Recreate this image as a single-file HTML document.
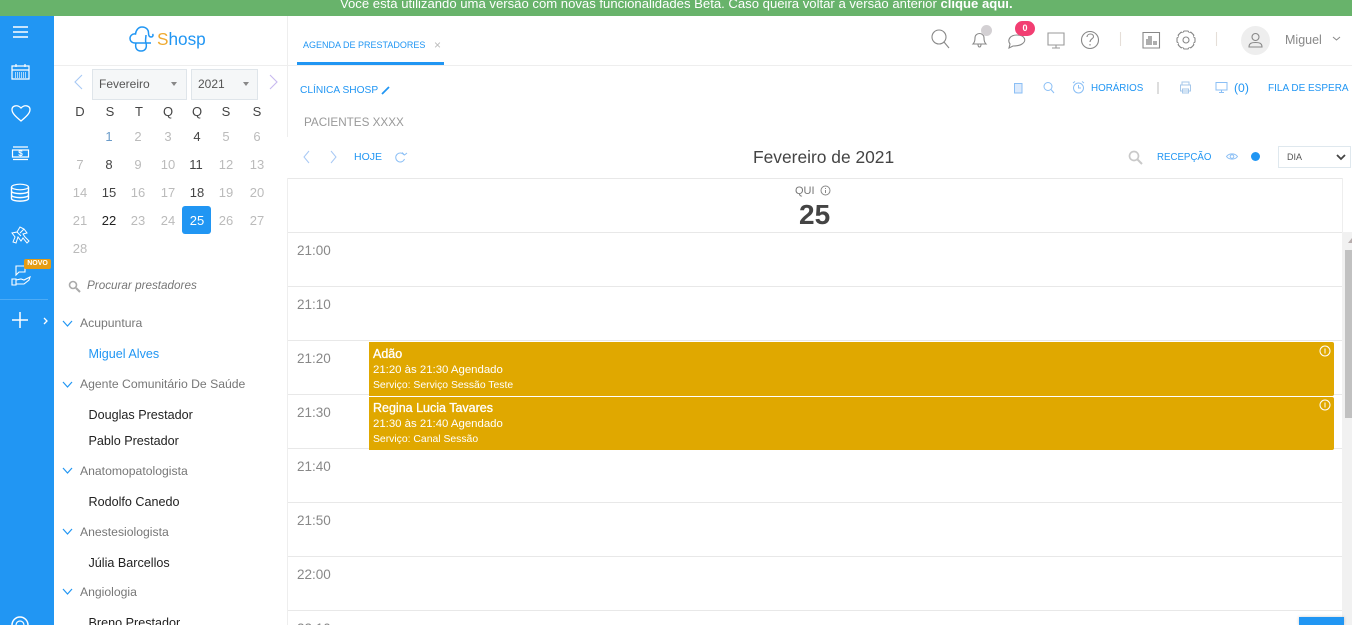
<!DOCTYPE html>
<html lang="pt"><head><meta charset="utf-8"><title>Shosp</title>
<style>
html,body{margin:0;padding:0;width:1352px;height:625px;overflow:hidden;background:#fff;font-family:"Liberation Sans",sans-serif}
#w{position:relative;width:1352px;height:625px;overflow:hidden;background:#fff}
.t{position:absolute;white-space:nowrap;line-height:16px}
.r{position:absolute}
svg{position:absolute;overflow:visible;fill:none}
.c{text-align:center;width:30px;font-size:13px;color:#bbb}
.d{color:#444}
.b{color:#2196f3}
.h{height:1px;left:288px;width:1054px;background:#e8e8e8}
.time{font-size:13.500px;color:#888;left:297px}
.cat{left:80px;font-size:12.200px;color:#777}
.doc{left:88.500px;font-size:12.600px;color:#222}
.evn{left:373px;font-size:12.500px;color:#fff;-webkit-text-stroke:.3px #fff}
.evt{left:373px;font-size:11.400px;color:#fff}
.evs{left:373px;font-size:10.400px;color:#fff}
</style></head><body><div id="w">
<div class="r" style="left:0;top:0;width:1352px;height:16px;background:#68b36b;overflow:hidden"><div class="t" style="left:340px;top:-4px;font-size:13.120px;color:#fff">Você está utilizando uma versão com novas funcionalidades Beta. Caso queira voltar a versão anterior <b>clique aqui.</b></div></div>

<!-- blue sidebar -->
<div class="r" style="left:0;top:16px;width:54px;height:609px;background:#2196f3"></div>
<svg style="left:0;top:0" width="54" height="625" stroke="#fff" stroke-width="1.2">
<path d="M13 27H28M13 32H28M13 37H28" stroke-width="1.4"/>
<path d="M12 66H29V79H12ZM12 70H29M16 64V67M25 64V67"/><path d="M15 73H26M15 75H26M15 77H26" stroke-dasharray="1 1"/>
<path d="M21 121C15 116 12 113 12 109.500C12 106 17 104 21 108C25 104 30 106 30 109.500C30 113 27 116 21 121Z" stroke-width="1.3"/>
<path d="M12.500 150H28.500V157H12.500ZM13 147H28M13 159.500H28"/>
<ellipse cx="20" cy="187" rx="8.500" ry="2.800"/><path d="M11.500 187V198.500C11.500 202 28.500 202 28.500 198.500V187M11.500 191C11.500 194.500 28.500 194.500 28.500 191M11.500 195C11.500 198.500 28.500 198.500 28.500 195" stroke-width="1.400"/>
<path d="M13 242L15 237L12 233L17 232L20 227L24 229L27 233L23 234L25 237L29 241L27 243L23 238L21 241L18 237L16 243ZM17 232L21 236M24 229L20 233" stroke-width="1"/>
<path d="M16 266H25V272H19L16 275ZM12 279H16V285H12ZM16 280L21 279L24 280L30 277L29 280L24 284H16" stroke-width="1.1"/>
<path d="M0 299.500H48" stroke="#4dabf5" stroke-width="1"/>
<path d="M20 312V328M12 320H28" stroke-width="1.5"/><path d="M44 318L47 321L44 324" stroke-width="1.3"/>
<circle cx="20" cy="625" r="8" stroke-width="1.500"/><circle cx="20" cy="625" r="4"/>
</svg>
<div class="t" style="left:12.500px;top:149px;width:16px;height:9px;line-height:9px;color:#fff;font-size:8px;font-weight:bold;text-align:center">$</div>
<div class="t" style="left:24px;top:259px;width:27px;height:10px;line-height:10px;background:#e59c14;border-radius:2px;color:#fff;font-size:7px;font-weight:bold;text-align:center">NOVO</div>

<!-- logo -->
<svg style="left:128px;top:26px" width="30" height="26" stroke="#2196f3" stroke-width="1.500"><path d="M23 17H7C3.500 17 2 14.500 2 12.500C2 10 4 7.500 7.500 8C8 4 10.500 1 14 1C18 1 20.500 3.500 20.500 7C20.500 9 21 11 23 11C25 11 25.500 9 24.500 8"/><path d="M8 17C7 21 8 25 13 25C18 25 19 21 18 17C17 15 18 11 18 9"/></svg>
<div class="t" style="left:157px;top:29px;font-size:17.200px;line-height:20px;color:#2196f3"><span style="color:#efa92f">S</span>hosp</div>
<div class="r" style="left:54px;top:65px;width:1298px;height:1px;background:#eee"></div>
<div class="r" style="left:287px;top:16px;width:1px;height:121px;background:#eee"></div>
<div class="r" style="left:287px;top:178px;width:1px;height:447px;background:#eee"></div>

<!-- calendar -->
<svg style="left:72px;top:74px" width="210" height="18" stroke-width="1.100"><path d="M10 1L3 8L10 15" stroke="#a8c9f5"/><path d="M198 1L205 8L198 15" stroke="#c7b9ef"/></svg>
<div class="r" style="left:92px;top:69px;width:93px;height:29px;background:#f5f7f8;border:1px solid #dfe5ea"></div>
<div class="t" style="left:99px;top:76px;font-size:12px;color:#555">Fevereiro</div>
<div class="r" style="left:171px;top:82px;border:3px solid transparent;border-top:4px solid #888;border-bottom:0"></div>
<div class="r" style="left:191px;top:69px;width:65px;height:29px;background:#f5f7f8;border:1px solid #dfe5ea"></div>
<div class="t" style="left:198px;top:76px;font-size:12px;color:#555">2021</div>
<div class="r" style="left:243px;top:82px;border:3px solid transparent;border-top:4px solid #888;border-bottom:0"></div>

<div class="t c d" style="left:65px;top:104px">D</div><div class="t c d" style="left:95px;top:104px">S</div><div class="t c d" style="left:124px;top:104px">T</div><div class="t c d" style="left:153px;top:104px">Q</div><div class="t c d" style="left:182px;top:104px">Q</div><div class="t c d" style="left:211px;top:104px">S</div><div class="t c d" style="left:242px;top:104px">S</div>
<div class="t c" style="left:94px;top:129px;color:#6a9bc9">1</div><div class="t c" style="left:123px;top:129px">2</div><div class="t c" style="left:153px;top:129px">3</div><div class="t c d" style="left:182px;top:129px">4</div><div class="t c" style="left:211px;top:129px">5</div><div class="t c" style="left:242px;top:129px">6</div>
<div class="t c" style="left:65px;top:157px">7</div><div class="t c d" style="left:94px;top:157px">8</div><div class="t c" style="left:123px;top:157px">9</div><div class="t c" style="left:153px;top:157px">10</div><div class="t c d" style="left:181px;top:157px">11</div><div class="t c" style="left:211px;top:157px">12</div><div class="t c" style="left:242px;top:157px">13</div>
<div class="t c" style="left:65px;top:185px">14</div><div class="t c d" style="left:94px;top:185px">15</div><div class="t c" style="left:123px;top:185px">16</div><div class="t c" style="left:153px;top:185px">17</div><div class="t c d" style="left:182px;top:185px">18</div><div class="t c" style="left:211px;top:185px">19</div><div class="t c" style="left:242px;top:185px">20</div>
<div class="t c" style="left:65px;top:213px">21</div><div class="t c d" style="left:94px;top:213px;color:#222">22</div><div class="t c" style="left:123px;top:213px">23</div><div class="t c" style="left:153px;top:213px">24</div>
<div class="r" style="left:182px;top:206px;width:29px;height:28px;background:#2196f3;border-radius:3px"></div><div class="t c" style="left:182px;top:213px;color:#fff">25</div>
<div class="t c" style="left:211px;top:213px">26</div><div class="t c" style="left:242px;top:213px">27</div>
<div class="t c" style="left:65px;top:241px">28</div>

<!-- list -->
<svg style="left:68px;top:280px" width="13" height="13" stroke="#aaa" stroke-width="1.600"><circle cx="5" cy="5" r="3.500"/><path d="M8 8L12 12" stroke-width="2"/></svg>
<div class="t" style="left:87px;top:278px;font-size:11.700px;font-style:italic;color:#777">Procurar prestadores</div>
<svg style="left:62px;top:320px" width="12" height="280" stroke="#2196f3" stroke-width="1.200"><path d="M1 1L5.500 6L10 1M1 62L5.500 67L10 62M1 148L5.500 153L10 148M1 209L5.500 214L10 209M1 269L5.500 274L10 269"/></svg>
<div class="t cat" style="top:315px">Acupuntura</div>
<div class="t doc" style="top:346px;color:#2196f3">Miguel Alves</div>
<div class="t cat" style="top:376px">Agente Comunitário De Saúde</div>
<div class="t doc" style="top:407px">Douglas Prestador</div>
<div class="t doc" style="top:433px">Pablo Prestador</div>
<div class="t cat" style="top:463px">Anatomopatologista</div>
<div class="t doc" style="top:494px">Rodolfo Canedo</div>
<div class="t cat" style="top:524px">Anestesiologista</div>
<div class="t doc" style="top:555px">Júlia Barcellos</div>
<div class="t cat" style="top:584px">Angiologia</div>
<div class="t doc" style="top:615px">Breno Prestador</div>

<!-- tab -->
<div class="t b" style="left:303px;top:37px;font-size:9px">AGENDA DE PRESTADORES</div>
<div class="t" style="left:434px;top:37px;font-size:12px;color:#bbb">×</div>
<div class="r" style="left:297px;top:62px;width:147px;height:3px;background:#2196f3"></div>

<!-- top icons -->
<svg style="left:930px;top:28px" width="400" height="24" stroke="#888" stroke-width="1.100">
<circle cx="9" cy="9" r="7"/><path d="M14 14L19 20"/>
<path d="M43 16C45 14 45 12 45 10C45 4 54 4 54 10C54 12 54 14 56 16ZM48 16C48 20 51 20 51 16"/>
<path d="M79 20L80 16C77 12 80 7 87 7C95 7 97 13 92 16C89 18 85 18 83 18Z"/>
<path d="M118 5H134V17H118ZM126 17V20M122 20H130" stroke="#999"/>
<circle cx="160" cy="12" r="8.500"/><path d="M157 9C157 5 164 5 163.500 9C163 11 160 11 160 14M160 16V17.500"/>
<path d="M190.500 4V18M286.500 4V18" stroke="#e5ded8"/>
<path d="M213 4.500H229.500V20H213Z"/><path d="M217 17V11M219 17V8M221 17V8M224 17V13M226 17V13" stroke="#777" stroke-width="1.200"/>
<g fill="#fff"><rect x="253.500" y="3" width="5" height="18" rx="1"/><rect x="253.500" y="3" width="5" height="18" rx="1" transform="rotate(45 256 12)"/><rect x="253.500" y="3" width="5" height="18" rx="1" transform="rotate(90 256 12)"/><rect x="253.500" y="3" width="5" height="18" rx="1" transform="rotate(135 256 12)"/><circle cx="256" cy="12" r="7" stroke="#fff" stroke-width="2"/><circle cx="256" cy="12" r="3"/></g>
</svg>
<div class="r" style="left:981px;top:25px;width:11px;height:11px;background:#d3d0d3;border-radius:50%"></div>
<div class="t" style="left:1015px;top:21px;width:20px;height:15px;line-height:15px;background:#f23e72;border-radius:8px;color:#fff;font-size:9px;font-weight:bold;text-align:center">0</div>
<div class="r" style="left:1241px;top:26px;width:29px;height:29px;background:#eee;border-radius:50%"></div>
<svg style="left:1248px;top:32px" width="16" height="16" stroke="#888" stroke-width="1.100"><circle cx="7.500" cy="5" r="3.500"/><path d="M1 15C1 11 4 10.500 7.500 10.500C11 10.500 14 11 14 15Z"/></svg>
<div class="t" style="left:1285px;top:32px;font-size:12.500px;color:#888">Miguel</div>
<svg style="left:1332px;top:36px" width="9" height="6" stroke="#888"><path d="M1 1L4.500 4L8 1"/></svg>

<!-- second row -->
<div class="t b" style="left:300px;top:83px;font-size:10.200px">CLÍNICA SHOSP</div>
<svg style="left:381px;top:85px" width="10" height="10" stroke="#2196f3" stroke-width="1.800"><path d="M1 9L8 2"/></svg>
<div class="t" style="left:304px;top:114.500px;font-size:11.700px;color:#999">PACIENTES XXXX</div>
<svg style="left:1010px;top:80px" width="240" height="16" stroke="#8bbff5" stroke-width="1">
<path d="M4.500 3.500H12V13H4.500Z" fill="#dceafc"/>
<circle cx="38" cy="6.500" r="4"/><path d="M41 9.500L44 13"/>
<circle cx="68.500" cy="8" r="5"/><path d="M68.500 5V8H71M63 3L65 1.500M74 3L72 1.500"/>
<path d="M148 2V14" stroke="#bbb"/>
<path d="M170.500 5H180.500V11H170.500ZM172 5V2H179V5M172.500 9H178.500V13H172.500Z" stroke="#a5c7ea"/>
<path d="M206 2.500H217V10H206ZM211.500 10V12.500M209 12.500H214"/>
</svg>
<div class="t b" style="left:1091px;top:81px;font-size:9.800px">HORÁRIOS</div>
<div class="t b" style="left:1234px;top:80px;font-size:12.200px">(0)</div>
<div class="t b" style="left:1268px;top:81px;font-size:10px">FILA DE ESPERA</div>

<!-- toolbar -->
<svg style="left:303px;top:150px" width="100" height="14" stroke="#a8c9f5" stroke-width="1"><path d="M6 1L1 7L6 13M28 1L33 7L28 13"/><path d="M101 5A4.500 4.500 0 1 0 101.500 9M99 2.500L101.500 5L104 3" stroke="#8bbff5"/></svg>
<div class="t b" style="left:354px;top:149px;font-size:10.500px">HOJE</div>
<div class="t" style="left:753px;top:147px;font-size:17.400px;line-height:20px;color:#444">Fevereiro de 2021</div>
<svg style="left:1128px;top:150px" width="16" height="16" stroke="#c9c9c9" stroke-width="1.700"><circle cx="6" cy="6" r="4.500"/><path d="M9.500 9.500L14 14" stroke-width="2"/></svg>
<div class="t b" style="left:1157px;top:150px;font-size:9.700px">RECEPÇÃO</div>
<svg style="left:1226px;top:153px" width="12" height="8" stroke="#8bbff5"><path d="M0.500 3.500C3 0 9 0 11.500 3.500C9 7 3 7 0.500 3.500Z"/><circle cx="6" cy="3.500" r="1.800"/></svg>
<div class="r" style="left:1251px;top:152px;width:9px;height:9px;background:#2196f3;border-radius:50%"></div>
<div class="r" style="left:1278px;top:146px;width:71px;height:20px;border:1px solid #dfe8ee"></div>
<div class="t" style="left:1287px;top:149px;font-size:9px;color:#555">DIA</div>
<svg style="left:1336px;top:154px" width="10" height="6" stroke="#444" stroke-width="1.800"><path d="M1 1L5 5L9 1"/></svg>

<!-- grid -->
<div class="r h" style="top:178px"></div>
<div class="r" style="left:1342px;top:178px;width:1px;height:54px;background:#eee"></div>
<div class="t" style="left:795px;top:183px;font-size:11px;color:#777">QUI</div>
<svg style="left:820px;top:185px" width="11" height="11" stroke="#888"><circle cx="5.500" cy="5.500" r="4.500"/><path d="M5.500 3V4M5.500 5V8"/></svg>
<div class="t" style="left:799px;top:200px;font-size:28px;line-height:30px;font-weight:bold;color:#444">25</div>
<div class="r h" style="top:232px"></div>
<div class="r h" style="top:286px"></div>
<div class="r h" style="top:340px"></div>
<div class="r h" style="top:394px"></div>
<div class="r h" style="top:448px"></div>
<div class="r h" style="top:502px"></div>
<div class="r h" style="top:556px"></div>
<div class="r h" style="top:610px"></div>
<div class="t time" style="top:243px">21:00</div>
<div class="t time" style="top:297px">21:10</div>
<div class="t time" style="top:351px">21:20</div>
<div class="t time" style="top:405px">21:30</div>
<div class="t time" style="top:459px">21:40</div>
<div class="t time" style="top:513px">21:50</div>
<div class="t time" style="top:567px">22:00</div>
<div class="t time" style="top:621px">22:10</div>

<!-- events -->
<div class="r" style="left:369px;top:342px;width:965px;height:54px;background:#e0a800;border-radius:0 2px 2px 0"></div>
<div class="r" style="left:369px;top:397px;width:965px;height:53px;background:#e0a800;border-radius:0 2px 2px 0"></div>
<div class="t evn" style="top:346px">Adão</div>
<div class="t evt" style="top:362px">21:20 às 21:30 Agendado</div>
<div class="t evs" style="top:378px">Serviço: Serviço Sessão Teste</div>
<div class="t evn" style="top:400px">Regina Lucia Tavares</div>
<div class="t evt" style="top:416px">21:30 às 21:40 Agendado</div>
<div class="t evs" style="top:432px">Serviço: Canal Sessão</div>
<svg style="left:1319px;top:345px" width="12" height="66" stroke="#fff" stroke-width="1"><circle cx="6" cy="6" r="5"/><path d="M6 3.500V8.500"/><circle cx="6" cy="60" r="5"/><path d="M6 57.500V62.500"/></svg>

<!-- scrollbar -->
<div class="r" style="left:1342px;top:232px;width:10px;height:393px;background:#f1f1f1"></div>
<div class="r" style="left:1345px;top:250px;width:7px;height:168px;background:#c1c1c1"></div>
<div class="r" style="left:1348px;top:238px;border:4px solid transparent;border-bottom:5px solid #b8aeae;border-top:0"></div>
<div class="r" style="left:1299px;top:617px;width:45px;height:8px;background:#2196f3;box-shadow:0 0 3px rgba(0,0,0,.2)"></div>
</div></body></html>
